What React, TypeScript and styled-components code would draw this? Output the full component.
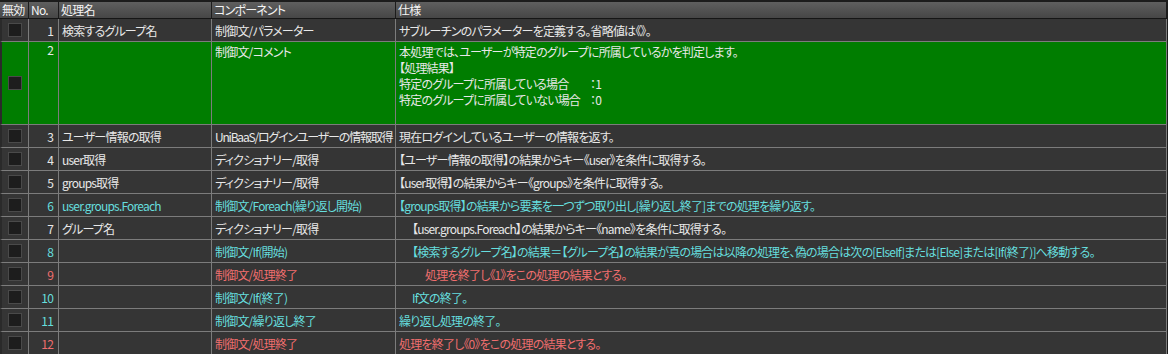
import React from "react";
import styled, { createGlobalStyle, css } from "styled-components";

const GlobalStyle = createGlobalStyle`
  html, body {
    margin: 0;
    padding: 0;
    background: #1c1c1c;
  }
  body {
    font-family: "Noto Sans CJK JP", "Noto Sans", sans-serif;
    font-size: 12px;
    color: #e8e8e8;
    overflow: hidden;
  }
`;

type Tone = "normal" | "cyan" | "red";

const toneColor = (t: Tone) =>
  t === "cyan" ? "#66dede" : t === "red" ? "#f06e6e" : "#e8e8e8";

const COLS = "29px 30px 153px 184px 771px";

const Table = styled.div`
  margin-top: 2px;
  width: 1167px;
  font-feature-settings: "palt";
  letter-spacing: -0.8px;
`;

const HeaderRow = styled.div`
  display: grid;
  grid-template-columns: ${COLS};
  height: 16px;
  border-bottom: 1px solid #161616;
`;

const HeaderCell = styled.div`
  box-sizing: border-box;
  background: linear-gradient(#5f5f5f, #464646);
  border-right: 1px solid #1c1c1c;
  padding-left: 2px;
  line-height: 16px;
  color: #f4f4f4;
  white-space: nowrap;
  overflow: hidden;
`;

const Row = styled.div<{ $green?: boolean; $tall?: boolean }>`
  display: grid;
  grid-template-columns: ${COLS};
  height: ${(p) => (p.$tall ? "83px" : "23px")};
  background: ${(p) => (p.$green ? "#007d00" : "#353535")};
`;

const Cell = styled.div<{ $tone?: Tone; $top?: boolean; $indent?: number; $squeeze?: boolean }>`
  box-sizing: border-box;
  border-right: 1px solid #7c7c7c;
  border-bottom: 1px solid #7c7c7c;
  padding: 0 2px 0 ${(p) => 3 + (p.$indent ?? 0) * 13}px;
  color: ${(p) => toneColor(p.$tone ?? "normal")};
  white-space: nowrap;
  overflow: hidden;
  display: flex;
  align-items: ${(p) => (p.$top ? "flex-start" : "center")};
  ${(p) =>
    p.$squeeze &&
    css`
      letter-spacing: -1.2px;
    `}
  ${(p) =>
    p.$top &&
    css`
      padding-top: 2px;
    `}
`;

const CheckCell = styled(Cell)`
  border-left: 2px solid #2a2a2a;
  padding: 0;
  justify-content: center;
  align-items: center;
`;

const NoCell = styled(Cell)`
  justify-content: flex-end;
  padding: 0 5px 0 0;
`;

const Check = styled.div`
  width: 14px;
  height: 14px;
  box-sizing: border-box;
  background: #1d1d1d;
  border: 1px solid #4a4a4a;
`;

const Lines = styled.div`
  display: flex;
  flex-direction: column;
  line-height: 16px;
`;

const LabelLine = styled.div`
  display: flex;
`;

const Label = styled.span`
  min-width: 191px;
  flex-shrink: 0;
`;

interface RowData {
  no: number;
  tone?: Tone;
  name?: string;
  comp: string;
  spec: string;
  indent?: number;
  squeeze?: boolean;
}

const rows: RowData[] = [
  { no: 3, name: "ユーザー情報の取得", comp: "UniBaaS/ログインユーザーの情報取得", squeeze: true, spec: "現在ログインしているユーザーの情報を返す。" },
  { no: 4, name: "user取得", comp: "ディクショナリー/取得", spec: "【ユーザー情報の取得】の結果からキー《user》を条件に取得する。" },
  { no: 5, name: "groups取得", comp: "ディクショナリー/取得", spec: "【user取得】の結果からキー《groups》を条件に取得する。" },
  { no: 6, tone: "cyan", name: "user.groups.Foreach", comp: "制御文/Foreach(繰り返し開始)", spec: "【groups取得】の結果から要素を一つずつ取り出し[繰り返し終了]までの処理を繰り返す。" },
  { no: 7, name: "グループ名", comp: "ディクショナリー/取得", indent: 1, spec: "【user.groups.Foreach】の結果からキー《name》を条件に取得する。" },
  { no: 8, tone: "cyan", comp: "制御文/If(開始)", indent: 1, spec: "【検索するグループ名】の結果＝【グループ名】の結果が真の場合は以降の処理を、偽の場合は次の[ElseIf]または[Else]または[If(終了)]へ移動する。" },
  { no: 9, tone: "red", comp: "制御文/処理終了", indent: 2, spec: "処理を終了し《1》をこの処理の結果とする。" },
  { no: 10, tone: "cyan", comp: "制御文/If(終了)", indent: 1, spec: "If文の終了。" },
  { no: 11, tone: "cyan", comp: "制御文/繰り返し終了", spec: "繰り返し処理の終了。" },
  { no: 12, tone: "red", comp: "制御文/処理終了", spec: "処理を終了し《0》をこの処理の結果とする。" },
];

export default function App() {
  return (
    <>
      <GlobalStyle />
      <Table>
        <HeaderRow>
          <HeaderCell>無効</HeaderCell>
          <HeaderCell>No.</HeaderCell>
          <HeaderCell>処理名</HeaderCell>
          <HeaderCell>コンポーネント</HeaderCell>
          <HeaderCell>仕様</HeaderCell>
        </HeaderRow>

        <Row>
          <CheckCell><Check /></CheckCell>
          <NoCell>1</NoCell>
          <Cell>検索するグループ名</Cell>
          <Cell>制御文/パラメーター</Cell>
          <Cell>サブルーチンのパラメーターを定義する。省略値は《》。</Cell>
        </Row>

        <Row $green $tall>
          <CheckCell><Check /></CheckCell>
          <NoCell $top>
            <Lines>2</Lines>
          </NoCell>
          <Cell $top />
          <Cell $top>
            <Lines>制御文/コメント</Lines>
          </Cell>
          <Cell $top>
            <Lines>
              <div>本処理では、ユーザーが特定のグループに所属しているかを判定します。</div>
              <div>【処理結果】</div>
              <LabelLine>
                <Label>特定のグループに所属している場合</Label>
                <span>：1</span>
              </LabelLine>
              <LabelLine>
                <Label>特定のグループに所属していない場合</Label>
                <span>：0</span>
              </LabelLine>
            </Lines>
          </Cell>
        </Row>

        {rows.map((r) => {
          const t = r.tone ?? "normal";
          return (
            <Row key={r.no}>
              <CheckCell><Check /></CheckCell>
              <NoCell $tone={t}>{r.no}</NoCell>
              <Cell $tone={t}>{r.name ?? ""}</Cell>
              <Cell $tone={t} $squeeze={r.squeeze}>{r.comp}</Cell>
              <Cell $tone={t} $indent={r.indent ?? 0}>{r.spec}</Cell>
            </Row>
          );
        })}
      </Table>
    </>
  );
}
